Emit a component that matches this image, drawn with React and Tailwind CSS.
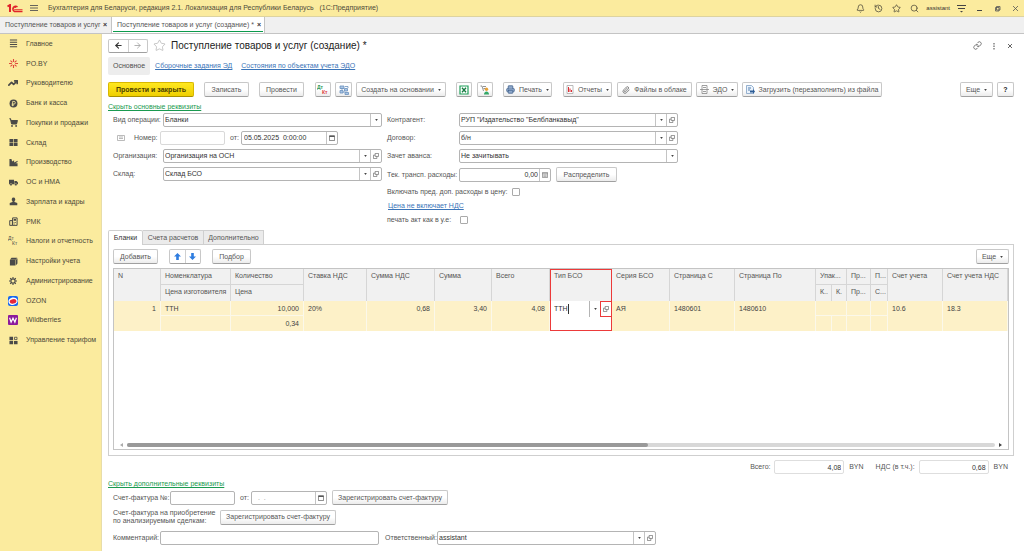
import { Bell, History, Star, Search, Link, Paperclip, Printer, TrendingUp, ShoppingCart, ArrowLeft, ArrowRight } from 'lucide-react'

const NAV = [
  { label: 'Главное', icon: 'home' },
  { label: 'PO.BY', icon: 'po' },
  { label: 'Руководителю', icon: 'trend' },
  { label: 'Банк и касса', icon: 'bank' },
  { label: 'Покупки и продажи', icon: 'cart' },
  { label: 'Склад', icon: 'stock' },
  { label: 'Производство', icon: 'factory' },
  { label: 'ОС и НМА', icon: 'truck' },
  { label: 'Зарплата и кадры', icon: 'person' },
  { label: 'РМК', icon: 'rmk' },
  { label: 'Налоги и отчетность', icon: 'tax' },
  { label: 'Настройки учета', icon: 'box' },
  { label: 'Администрирование', icon: 'gear' },
  { label: 'OZON', icon: 'ozon' },
  { label: 'Wildberries', icon: 'wb' },
  { label: 'Управление тарифом', icon: 'tariff' },
]

const COLS = [47, 70, 73, 63, 68, 57, 58, 62, 58, 65, 81, 16, 15, 24, 17, 55, 65]

function NavIcon({ name }) {
  if (name === 'trend') return <TrendingUp size={10} strokeWidth={4} />
  if (name === 'cart') return <ShoppingCart size={9} strokeWidth={3} fill="currentColor" />
  if (name === 'gear') {
    return (
      <svg viewBox="0 0 10 10" className="size-2" fill="none" stroke="currentColor">
        <circle cx="5" cy="5" r="2.6" strokeWidth="1.4" />
        <path d="M5 0v2M5 8v2M0 5h2M8 5h2M1.5 1.5l1.3 1.3M7.2 7.2l1.3 1.3M8.5 1.5L7.2 2.8M2.8 7.2L1.5 8.5" strokeWidth="1.4" />
      </svg>
    )
  }
  if (name === 'tax') {
    return (
      <svg viewBox="0 0 10 10" className="size-[10px]" fill="currentColor" fontFamily="Liberation Sans" fontSize="5">
        <text x="0" y="4">Дт</text>
        <text x="4" y="9">Кт</text>
      </svg>
    )
  }
  if (name === 'ozon') {
    return (
      <svg viewBox="0 0 10 10" className="size-[10px]">
        <rect width="10" height="10" rx="2" fill="#1668f0" />
        <ellipse cx="5" cy="5.2" rx="4.6" ry="3.7" fill="#fff" transform="rotate(-12 5 5)" />
        <ellipse cx="5" cy="5.4" rx="3.4" ry="2.2" fill="#e5263a" transform="rotate(-12 5 5)" />
      </svg>
    )
  }
  if (name === 'wb') {
    return (
      <svg viewBox="0 0 10 10" className="size-[10px]">
        <rect width="10" height="10" rx="1" fill="#8c1a9c" />
        <path d="M1.6 2.8l1.5 4.4L5 3.2l1.9 4L8.4 2.8" fill="none" stroke="#fff" strokeWidth="1.2" />
      </svg>
    )
  }
  if (name === 'po') {
    return (
      <svg viewBox="0 0 10 10" className="size-[9px]" fill="none" stroke="#e0483c" strokeWidth="1.2">
        <path d="M5 0v3.4M5 6.6V10M0 5h3.2M6.8 5H10M1.6 1.8l2.2 2M8.4 1.8l-2.2 2M1.6 8.2l2.2-2M8.4 8.2l-2.2-2" />
      </svg>
    )
  }
  return (
    <svg viewBox="0 0 10 10" className="size-[9px]" fill="currentColor">
      {name === 'home' && <path d="M1 .5h8v1.3H1zM1 3h8v1.3H1zM1 5.5h8v1.3H1zM1 8h8v1.3H1z" />}
      {name === 'bank' && (
        <>
          <circle cx="5" cy="5" r="4.4" />
          <path d="M4 8V2.7h1.6a1.4 1.4 0 0 1 0 2.9H3M3 6.8h2.6" fill="none" stroke="#fbeb9e" strokeWidth=".9" />
        </>
      )}
      {name === 'stock' && <path d="M.5 1h4.2v3.6H.5zM5.4 1h4.1v3.6H5.4zM.5 5.3h4.2V9H.5zM5.4 5.3h4.1V9H5.4z" />}
      {name === 'factory' && <path d="M.5 9.2V1h2.2l.8 3 2.2-1.4V5l3.8-2v1.4L7 5.8h2.5v3.4z" />}
      {name === 'truck' && (
        <>
          <path d="M0 2h5.6v5H0zM6 3.2h2.4L10 5v2H6z" />
          <circle cx="2.2" cy="7.3" r="1.3" stroke="#fbeb9e" strokeWidth=".4" />
          <circle cx="7.6" cy="7.3" r="1.3" stroke="#fbeb9e" strokeWidth=".4" />
        </>
      )}
      {name === 'person' && <path d="M5 .6a2 2.2 0 0 1 1 4.1l.2.9 3 1.2v2.4H.8V6.8l3-1.2.2-.9A2 2.2 0 0 1 5 .6z" />}
      {name === 'rmk' && (
        <>
          <path d="M4 1h5v8.3H4zM.8 4h3v5.3h-3z" fill="none" stroke="currentColor" strokeWidth="1.1" />
          <path d="M5.2 2.3h2.6v2H5.2zM5.2 5.5h1v1h-1zM6.8 5.5h1v1h-1zM5.2 7.2h1v1h-1z" />
        </>
      )}
      {name === 'box' && <path d="M1 3L2.8.8h6.4L7.5 3zM1 3.4h6.2v6H1zM7.7 3.3l1.7-2v6L7.7 9.2z" />}
      {name === 'tariff' && (
        <>
          <path d="M.5.8h4v3.8h-4zM.5 5.5h4v3.8h-4zM5.5 5.5h4v3.8h-4z" />
          <path d="M6.1 1.4h2.8V4H6.1z" fill="none" stroke="currentColor" strokeWidth=".9" />
        </>
      )}
    </svg>
  )
}

function Caret() {
  return (
    <svg viewBox="0 0 4 3" className="h-[2px] w-[3px] shrink-0" fill="#444">
      <path d="M0 0h4L2 3z" />
    </svg>
  )
}

function OpenIcon() {
  return (
    <svg viewBox="0 0 7 7" className="size-[6px]" fill="none" stroke="#666" strokeWidth=".8">
      <path d="M2.5.5h4V4h-4zM2.5 2.5h-2v4h4V4" />
    </svg>
  )
}

function CalendarIcon() {
  return (
    <svg viewBox="0 0 7 7" className="size-[6px]" fill="none" stroke="#555">
      <path d="M.5 1h6v5.5h-6z" strokeWidth=".8" />
      <path d="M.5 1.5h6" strokeWidth="1.6" />
    </svg>
  )
}

function CalcIcon() {
  return (
    <svg viewBox="0 0 7 7" className="size-[6px]" fill="none" stroke="#777" strokeWidth=".8">
      <path d="M.5.5h6v6h-6zM.5 2h6M1.5 3.5h4M1.5 5h4" />
    </svg>
  )
}

function Button({ children, primary, className = '' }) {
  const tone = primary
    ? 'border-[#d9b800] border-b-[#a89000] from-[#ffe81e] to-[#efcf00] font-bold text-[#4a4000]'
    : 'border-[#c8c8c8] border-b-[#a0a0a0] from-white from-50% to-[#ececec]'
  return (
    <button
      type="button"
      className={`flex h-[15px] shrink-0 items-center justify-center gap-1 whitespace-nowrap rounded-[2px] border bg-linear-to-b ${tone} ${className}`}
    >
      {children}
    </button>
  )
}

const BOX = 'flex h-[14px] items-stretch rounded-[2px] border border-[#b4b4b4] bg-white'
const CELL_BTN = 'flex w-[11px] shrink-0 items-center justify-center border-l border-[#c4c4c4]'

function Picker({ id, label, value, open, labelClass }) {
  return (
    <div className="flex items-center">
      <label htmlFor={id} className={`shrink-0 whitespace-nowrap ${labelClass}`}>{label}</label>
      <div className={`${BOX} w-[219px]`}>
        <select id={id} className="min-w-0 flex-1 appearance-none px-px text-[#333] outline-none">
          <option>{value}</option>
        </select>
        <span className={CELL_BTN}><Caret /></span>
        {open && <button type="button" aria-label={`Открыть: ${value}`} className={CELL_BTN}><OpenIcon /></button>}
      </div>
    </div>
  )
}

function DateField({ id, value, width, muted }) {
  return (
    <div className={`${BOX} ${width}`}>
      <input id={id} defaultValue={value} className={`min-w-0 flex-1 px-[2px] outline-none ${muted ? 'text-[#999]' : 'text-[#333]'}`} />
      <button type="button" aria-label="Выбрать дату" className={CELL_BTN}><CalendarIcon /></button>
    </div>
  )
}

function TitleBar() {
  return (
    <header className="flex h-[17px] items-center border-b border-[#ddd3a0] bg-[#fbeb9e] pl-[7px] pr-1 text-[#4d4a3a]">
      <svg viewBox="0 0 32 18" className="h-[9px] w-4" fill="none" stroke="#e0232a" strokeWidth="2.8">
        <path d="M1 5l5-3v14" strokeWidth="4" />
        <path d="M21 6A5.5 5.5 0 1 0 15 15h16" />
        <path d="M18 8a2.5 2.5 0 1 0-3 3.4h16" strokeWidth="1.8" />
      </svg>
      <button type="button" aria-label="Меню" className="ml-[7px]">
        <svg viewBox="0 0 8 8" className="size-2" stroke="#555" strokeWidth=".9"><path d="M0 1.5h8M0 4h8M0 6.5h8" /></svg>
      </button>
      <span className="ml-[10px] whitespace-pre">Бухгалтерия для Беларуси, редакция 2.1. Локализация для Республики Беларусь   (1С:Предприятие)</span>
      <div className="ml-auto flex items-center gap-[9px]">
        <button type="button" aria-label="Уведомления"><Bell size={9} /></button>
        <button type="button" aria-label="История"><History size={9} /></button>
        <button type="button" aria-label="Избранное"><Star size={9} /></button>
        <button type="button" aria-label="Поиск"><Search size={9} /></button>
        <span className="-mx-[2px] text-[6px] text-[#333]">assistant</span>
        <button type="button" aria-label="Настройки">
          <svg viewBox="0 0 9 9" className="size-[9px]" stroke="#444" fill="#444"><path d="M0 1.5h9M1 4.5h7" fill="none" /><path d="M3 7h3L4.5 8.5z" stroke="none" /></svg>
        </button>
        <button type="button" aria-label="Свернуть">
          <svg viewBox="0 0 9 9" className="size-[9px]" stroke="#444"><path d="M2 6.5h5" /></svg>
        </button>
        <button type="button" aria-label="Развернуть">
          <svg viewBox="0 0 9 9" className="size-[9px]" stroke="#555" fill="none" strokeWidth=".8"><path d="M3.5 2.5H7V6H3.5zM2.5 3.5H6V7H2.5z" /></svg>
        </button>
        <button type="button" aria-label="Закрыть">
          <svg viewBox="0 0 9 9" className="size-[9px]" stroke="#555" strokeWidth=".8"><path d="M2 2l5 5M7 2L2 7" /></svg>
        </button>
      </div>
    </header>
  )
}

function TabBar() {
  return (
    <div className="flex h-[17px] items-stretch border-b border-[#c4c4c4] bg-[#f0f0f0]">
      <button type="button" className="flex w-28 items-center justify-between border-r border-[#c4c4c4] pl-[5px] pr-1 whitespace-nowrap">
        Поступление товаров и услуг <b className="text-[#333]">×</b>
      </button>
      <button type="button" className="flex w-[153px] items-stretch border-r border-[#c4c4c4] bg-white px-px pb-px whitespace-nowrap">
        <span className="flex flex-1 items-center justify-between border-b border-[#0c9a4c] pt-px pr-[2px] pl-1">
          Поступление товаров и услуг (создание) * <b className="text-[#333]">×</b>
        </span>
      </button>
    </div>
  )
}

function Sidebar() {
  return (
    <nav className="w-[102px] shrink-0 border-r border-[#e8dda8] bg-[#fbeb9e]">
      <ul className="flex h-[316px] flex-col">
        {NAV.map(n => (
          <li key={n.label} className="flex flex-1 items-center">
            <a href="#" className="flex items-center whitespace-nowrap text-[#4d4a3a]">
              <span className="flex w-[26px] items-center justify-center text-[#4a4a48]"><NavIcon name={n.icon} /></span>
              {n.label}
            </a>
          </li>
        ))}
      </ul>
    </nav>
  )
}

function DocHeader() {
  return (
    <>
      <div className="flex h-[21px] items-center">
        <div className="flex h-[14px] w-10 rounded-[2px] border border-[#c8c8c8] border-b-[#a0a0a0]">
          <button type="button" aria-label="Назад" className="flex flex-1 items-center justify-center border-r border-[#d0d0d0]"><ArrowLeft size={9} strokeWidth={3} color="#333" /></button>
          <button type="button" aria-label="Вперед" className="flex flex-1 items-center justify-center"><ArrowRight size={9} strokeWidth={2} color="#999" /></button>
        </div>
        <Star size={13} strokeWidth={1} color="#999" className="ml-[5px]" />
        <h1 className="ml-[5px] text-[10px] text-[#222]">Поступление товаров и услуг (создание) *</h1>
        <div className="ml-auto flex items-center gap-2 text-[#555]">
          <button type="button" aria-label="Ссылка"><Link size={9} /></button>
          <button type="button" aria-label="Действия">
            <svg viewBox="0 0 8 8" className="size-2" fill="#444"><path d="M3.5 1h1v1.5h-1zM3.5 3.5h1V5h-1zM3.5 6h1v1.5h-1z" /></svg>
          </button>
          <button type="button" aria-label="Закрыть документ">
            <svg viewBox="0 0 8 8" className="size-2" stroke="#555" strokeWidth=".9"><path d="M2 2l4 4M6 2L2 6" /></svg>
          </button>
        </div>
      </div>
      <div className="mt-px flex items-center text-[#3a74b8]">
        <a href="#" className="flex h-[18px] items-center rounded-[2px] bg-[#ededed] px-[5px] text-[#4d4d4d]">Основное</a>
        <a href="#" className="ml-[5px] underline">Сборочные задания ЭД</a>
        <a href="#" className="ml-[9px] underline">Состояния по объектам учета ЭДО</a>
      </div>
    </>
  )
}

function Toolbar() {
  return (
    <div className="mt-[7px] flex items-center">
      <Button primary className="w-[86px]">Провести и закрыть</Button>
      <Button className="ml-[10px] w-[45px]">Записать</Button>
      <Button className="ml-[10px] w-[45px]">Провести</Button>
      <Button className="ml-[11px] w-4">
        <svg viewBox="0 0 12 10" className="h-[10px] w-3" fontFamily="Liberation Sans" fontSize="5" fontWeight="bold" role="img" aria-label="Проводки">
          <text x="0" y="4" fill="#2c9a55">Дт</text>
          <text x="5" y="9" fill="#dc3c3c">Кт</text>
        </svg>
      </Button>
      <Button className="ml-1 w-[17px]">
        <svg viewBox="0 0 10 10" className="size-[10px]" fill="none" stroke="#6a90bd" strokeWidth=".8" role="img" aria-label="Структура подчиненности">
          <path d="M1 1h4v2.5H1zM5.5 3.5h3V6h-3zM1 5.5h3V8H1zM6 7.5h3.5v2H6z" fill="#a9c6e6" />
          <path d="M3 3v2M4 7h2M6 1.5h3V3" />
        </svg>
      </Button>
      <Button className="ml-1 w-[90px]">Создать на основании <Caret /></Button>
      <Button className="ml-[10px] w-4">
        <svg viewBox="0 0 10 10" className="size-[10px]" role="img" aria-label="Excel">
          <path d="M1 1h8v8H1z" fill="#fff" stroke="#21a05a" strokeWidth="1.2" />
          <path d="M3 2.8l4 4.4M7 2.8L3 7.2" stroke="#157a40" strokeWidth="1.3" />
        </svg>
      </Button>
      <Button className="ml-[5px] w-4">
        <svg viewBox="0 0 10 10" className="size-[10px]" fill="none" role="img" aria-label="Товары">
          <path d="M.5 1H2l1.5 5M3 1.5h3M3.5 3.5h2" stroke="#777" strokeWidth=".8" />
          <circle cx="6.5" cy="4.2" r="1.7" fill="#e6a23a" />
          <path d="M4 9.5c0-4 5-4 5 0z" fill="#35a868" />
        </svg>
      </Button>
      <Button className="ml-[10px] w-[49px]"><Printer size={9} strokeWidth={2} fill="#8fa9cc" color="#3d5f8a" />Печать <Caret /></Button>
      <Button className="ml-[11px] w-[49px]">
        <svg viewBox="0 0 8 9" className="h-[9px] w-2"><path d="M1 .5h6v8H1z" fill="#fff" stroke="#aaa" strokeWidth=".8" /><path d="M2.5 2v5M4 3.5V7M5.5 5v2" stroke="#dc2f35" /></svg>
        Отчеты <Caret />
      </Button>
      <Button className="ml-[5px] w-[75px]"><Paperclip size={8} color="#555" />Файлы в облаке</Button>
      <Button className="ml-1 w-[42px]">
        <svg viewBox="0 0 9 9" className="size-[9px]" fill="none" stroke="#888" strokeWidth=".8"><path d="M2 .5h5v8H2zM3 2.5h3M3 6.5h3M0 4.5h9" /></svg>
        ЭДО <Caret />
      </Button>
      <Button className="ml-1 w-[140px]">
        <svg viewBox="0 0 9 9" className="size-[9px]" fill="none"><path d="M.5.5h5l2 2v6h-7z" stroke="#7f9fc4" strokeWidth=".8" fill="#eaf2fb" /><path d="M2 3h3M2 5h2" stroke="#5580b0" /><path d="M4 5.5h3V4l2 2.5L7 9V7.5H4z" fill="#2c5c96" /></svg>
        Загрузить (перезаполнить) из файла
      </Button>
      <Button className="ml-auto w-[33px]">Еще <Caret /></Button>
      <Button className="ml-1 w-[17px] font-bold text-[#222]">?</Button>
    </div>
  )
}

function MainFields() {
  return (
    <div className="mt-[2px] flex gap-[5px] pl-[5px]">
      <div className="flex flex-col gap-1">
        <Picker id="op" label="Вид операции:" value="Бланки" labelClass="w-[50px]" />
        <div className="flex items-center">
          <svg viewBox="0 0 8 6" className="ml-1 h-[6px] w-2" fill="none" stroke="#aaa" strokeWidth=".8"><path d="M.5.5h7v5h-7zM2 2h4M2 3.5h4" /></svg>
          <label htmlFor="num" className="ml-[9px] w-[26px]">Номер:</label>
          <input id="num" className="h-[14px] w-[65px] rounded-[2px] border border-[#d9d9d9]" />
          <label htmlFor="date" className="ml-[5px] w-[11px]">от:</label>
          <DateField id="date" value="05.05.2025  0:00:00" width="w-[97px]" />
        </div>
        <Picker id="org" label="Организация:" value="Организация на ОСН" open labelClass="w-[50px]" />
        <Picker id="wh" label="Склад:" value="Склад БСО" open labelClass="w-[50px]" />
      </div>
      <div className="flex flex-col gap-1">
        <Picker id="agent" label="Контрагент:" value={'РУП "Издательство "Белбланкавыд"'} open labelClass="w-[72px]" />
        <Picker id="contract" label="Договор:" value="б/н" open labelClass="w-[72px]" />
        <Picker id="advance" label="Зачет аванса:" value="Не зачитывать" labelClass="w-[72px]" />
        <div className="flex items-center">
          <label htmlFor="transp" className="w-[72px] whitespace-nowrap">Тек. трансп. расходы:</label>
          <div className={`${BOX} w-[92px]`}>
            <input id="transp" defaultValue="0,00" className="min-w-0 flex-1 px-px text-right text-[#333] outline-none" />
            <button type="button" aria-label="Калькулятор" className={CELL_BTN}><CalcIcon /></button>
          </div>
          <Button className="ml-[5px] w-[61px]">Распределить</Button>
        </div>
        <div className="flex h-[11px] items-center gap-1">
          <label htmlFor="incl">Включать пред. доп. расходы в цену:</label>
          <input id="incl" type="checkbox" className="size-2 appearance-none rounded-[1px] border border-[#aaa]" />
        </div>
        <a href="#" className="flex h-[10px] items-center pl-px text-[#3a74b8] underline">Цена не включает НДС</a>
        <div className="flex h-[10px] items-center">
          <label htmlFor="act" className="w-[73px]">печать акт как в у.е:</label>
          <input id="act" type="checkbox" className="size-2 appearance-none rounded-[1px] border border-[#aaa]" />
        </div>
      </div>
    </div>
  )
}

function Th({ children, className = '', ...rest }) {
  return (
    <th {...rest} className={`overflow-hidden border-r border-[#d6d6d6] bg-[#f1f1f1] pt-[3px] pl-1 text-left align-top font-normal whitespace-nowrap ${className}`}>
      {children}
    </th>
  )
}

function Td({ children, className = '', ...rest }) {
  return (
    <td {...rest} className={`border-r border-[#fbf8ea] bg-[#fdf1c8] px-1 pt-1 align-top text-[#444] ${className}`}>
      {children}
    </td>
  )
}

function ItemsTable() {
  const line = 'border-b border-b-[#d6d6d6]'
  const rowLine = 'border-b border-b-[#fbf8ea]'
  return (
    <table className="w-full table-fixed border-separate border-spacing-0">
      <colgroup>
        {COLS.map((w, i) => <col key={i} style={{ width: w }} />)}
      </colgroup>
      <thead>
        <tr className="h-4">
          <Th rowSpan={2}>N</Th>
          <Th className={line}>Номенклатура</Th>
          <Th className={line}>Количество</Th>
          <Th rowSpan={2}>Ставка НДС</Th>
          <Th rowSpan={2}>Сумма НДС</Th>
          <Th rowSpan={2}>Сумма</Th>
          <Th rowSpan={2}>Всего</Th>
          <th rowSpan={2} className="border-x border-t border-[#ec3a3a] bg-[#f1f1f1] pt-[2px] pl-[3px] text-left align-top font-normal">Тип БСО</th>
          <Th rowSpan={2}>Серия БСО</Th>
          <Th rowSpan={2}>Страница С</Th>
          <Th rowSpan={2}>Страница По</Th>
          <Th colSpan={2} className={line}>Упак...</Th>
          <Th className={line}>Пр...</Th>
          <Th className={line}>П...</Th>
          <Th rowSpan={2}>Счет учета</Th>
          <Th rowSpan={2}>Счет учета НДС</Th>
        </tr>
        <tr className="h-4">
          <Th>Цена изготовителя</Th>
          <Th>Цена</Th>
          <Th>К..</Th>
          <Th>К.</Th>
          <Th>Пр...</Th>
          <Th>С...</Th>
        </tr>
      </thead>
      <tbody>
        <tr className="h-[15px]">
          <Td rowSpan={2} className="text-right">1</Td>
          <Td className={rowLine}>ТТН</Td>
          <Td className={`${rowLine} text-right`}>10,000</Td>
          <Td rowSpan={2}>20%</Td>
          <Td rowSpan={2} className="text-right">0,68</Td>
          <Td rowSpan={2} className="text-right">3,40</Td>
          <Td rowSpan={2} className="text-right">4,08</Td>
          <td rowSpan={2} className="border-x border-b border-[#ec3a3a] bg-white p-0 align-top">
            <div className="flex h-4 items-stretch">
              <input aria-label="Тип БСО" defaultValue="ТТН" className="w-[17px] pl-[3px] text-[#333] outline-none" />
              <span className="my-[3px] w-px bg-[#333]" />
              <button type="button" aria-label="Выбрать тип БСО" className="ml-auto flex w-[11px] items-center justify-center border-l border-[#b4b4b4]"><Caret /></button>
              <button type="button" aria-label="Открыть тип БСО" className="flex w-[11px] items-center justify-center border border-r-0 border-[#ec3a3a]"><OpenIcon /></button>
            </div>
          </td>
          <Td rowSpan={2}>АЯ</Td>
          <Td rowSpan={2}>1480601</Td>
          <Td rowSpan={2}>1480610</Td>
          <Td colSpan={2} className={rowLine} />
          <Td className={rowLine} />
          <Td className={rowLine} />
          <Td rowSpan={2}>10.6</Td>
          <Td rowSpan={2}>18.3</Td>
        </tr>
        <tr className="h-[15px]">
          <Td />
          <Td className="text-right">0,34</Td>
          <Td />
          <Td />
          <Td />
          <Td />
        </tr>
      </tbody>
    </table>
  )
}

function ItemsPanel() {
  return (
    <section className="mt-[5px] flex flex-1 flex-col">
      <div className="relative z-10 -mb-px flex h-[15px] items-stretch">
        <button type="button" className="w-[35px] rounded-t-[2px] border border-b-0 border-[#cfcfcf] bg-white text-[#333]">Бланки</button>
        <button type="button" className="w-[61px] border border-l-0 border-[#cfcfcf] bg-[#ebebeb]">Счета расчетов</button>
        <button type="button" className="w-[60px] border border-l-0 border-[#cfcfcf] bg-[#ebebeb]">Дополнительно</button>
      </div>
      <div className="flex flex-1 flex-col border border-[#cfcfcf] px-1 pt-1 pb-[5px]">
        <div className="flex items-center">
          <Button className="w-[45px]">Добавить</Button>
          <div className="ml-[11px] flex h-[15px] w-8 rounded-[2px] border border-[#c8c8c8] border-b-[#a0a0a0]">
            {['M4 0l4 4H5.5v4h-3V4H0z', 'M4 8L0 4h2.5V0h3v4H8z'].map((d, i) => (
              <button key={d} type="button" aria-label={i ? 'Вниз' : 'Вверх'} className={`flex flex-1 items-center justify-center ${i ? 'border-l border-[#d0d0d0]' : ''}`}>
                <svg viewBox="0 0 8 8" className="size-[7px]" fill="#2f7de0"><path d={d} /></svg>
              </button>
            ))}
          </div>
          <Button className="ml-[11px] w-[39px]">Подбор</Button>
          <Button className="ml-auto w-[33px]">Еще <Caret /></Button>
        </div>
        <div className="mt-1 flex flex-1 flex-col border border-[#c4c4c4]">
          <ItemsTable />
          <div className="mt-auto flex h-2 items-center gap-1 px-[6px]">
            <svg viewBox="0 0 3 4" className="h-1 w-[3px]" fill="#aaa"><path d="M3 0v4L0 2z" /></svg>
            <div className="h-1 flex-1 rounded-full bg-[#d8d8d8]">
              <div className="h-1 w-3/5 rounded-full bg-[#999]" />
            </div>
            <svg viewBox="0 0 3 4" className="h-1 w-[3px]" fill="#444"><path d="M0 0v4l3-2z" /></svg>
          </div>
        </div>
      </div>
    </section>
  )
}

function Footer() {
  return (
    <>
      <div className="mt-1 flex items-center justify-end pr-[6px]">
        <label htmlFor="total" className="w-6">Всего:</label>
        <input id="total" readOnly defaultValue="4,08" className="h-[14px] w-[70px] rounded-[2px] border border-[#dedede] px-[2px] text-right text-[#333]" />
        <span className="ml-[5px]">BYN</span>
        <label htmlFor="vat" className="ml-3 w-[43px] whitespace-nowrap">НДС (в т.ч.):</label>
        <input id="vat" readOnly defaultValue="0,68" className="h-[14px] w-[70px] rounded-[2px] border border-[#dedede] px-[2px] text-right text-[#333]" />
        <span className="ml-[5px]">BYN</span>
      </div>
      <div className="mt-[6px]"><a href="#" className="text-[#1a9a50] underline">Скрыть дополнительные реквизиты</a></div>
      <div className="mt-[2px] flex flex-col gap-1 pl-[5px]">
        <div className="flex items-center">
          <label htmlFor="inv" className="w-[57px] whitespace-nowrap">Счет-фактура №:</label>
          <input id="inv" className="h-[14px] w-[65px] rounded-[2px] border border-[#b4b4b4]" />
          <label htmlFor="invdate" className="ml-[5px] w-[11px]">от:</label>
          <DateField id="invdate" value="  .  ." width="w-[76px]" muted />
          <Button className="ml-[5px] w-[116px]">Зарегистрировать счет-фактуру</Button>
        </div>
        <div className="flex items-center">
          <p className="w-[107px] leading-[8px]">Счет-фактура на приобретение<br />по анализируемым сделкам:</p>
          <Button className="w-[116px]">Зарегистрировать счет-фактуру</Button>
        </div>
        <div className="mt-[2px] flex items-center gap-[6px]">
          <div className="flex items-center">
            <label htmlFor="comment" className="w-[47px]">Комментарий:</label>
            <input id="comment" className="h-[14px] w-[219px] rounded-[2px] border border-[#b4b4b4]" />
          </div>
          <Picker id="resp" label="Ответственный:" value="assistant" open labelClass="w-[52px]" />
        </div>
      </div>
    </>
  )
}

export default function App() {
  return (
    <div className="flex min-h-screen flex-col bg-white font-['Liberation_Sans',Arial,sans-serif] text-[7px] leading-[8px] text-[#555]">
      <TitleBar />
      <TabBar />
      <div className="flex flex-1 items-stretch">
        <Sidebar />
        <main className="flex min-w-0 flex-1 flex-col pt-px pr-[10px] pb-[6px] pl-[6px]">
          <DocHeader />
          <Toolbar />
          <div className="mt-[6px]"><a href="#" className="text-[#1a9a50] underline">Скрыть основные реквизиты</a></div>
          <MainFields />
          <ItemsPanel />
          <Footer />
        </main>
      </div>
    </div>
  )
}
